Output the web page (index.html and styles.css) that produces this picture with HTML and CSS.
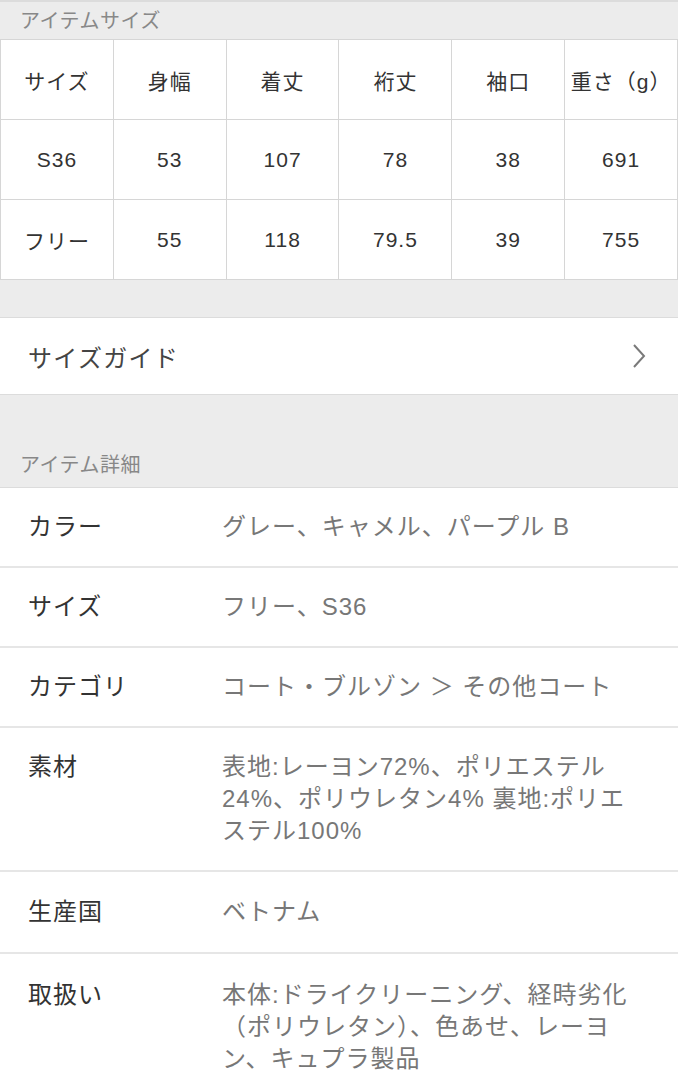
FILE: index.html
```html
<!DOCTYPE html>
<html lang="ja">
<head>
<meta charset="utf-8">
<link rel="stylesheet" href="styles.css">
</head>
<body>
<div class="page">
  <div class="section-title top">アイテムサイズ</div>
  <table class="size-table">
    <tr><td>サイズ</td><td>身幅</td><td>着丈</td><td>裄丈</td><td>袖口</td><td>重さ（g）</td></tr>
    <tr><td>S36</td><td>53</td><td>107</td><td>78</td><td>38</td><td>691</td></tr>
    <tr><td>フリー</td><td>55</td><td>118</td><td>79.5</td><td>39</td><td>755</td></tr>
  </table>
  <div class="spacer"></div>
  <div class="guide-row">
    <span>サイズガイド</span>
    <svg class="chevron" width="14" height="26" viewBox="0 0 14 26"><polyline points="2,2 12,13 2,24" fill="none" stroke="#7a7a7a" stroke-width="2"/></svg>
  </div>
  <div class="section-title detail">アイテム詳細</div>
  <div class="details">
    <div class="row"><div class="label">カラー</div><div class="value">グレー、キャメル、パープル B</div></div>
    <div class="row"><div class="label">サイズ</div><div class="value">フリー、S36</div></div>
    <div class="row"><div class="label">カテゴリ</div><div class="value">コート・ブルゾン ＞ その他コート</div></div>
    <div class="row"><div class="label">素材</div><div class="value">表地:レーヨン72%、ポリエステル24%、ポリウレタン4% 裏地:ポリエステル100%</div></div>
    <div class="row tall"><div class="label">生産国</div><div class="value">ベトナム</div></div>
    <div class="row care"><div class="label">取扱い</div><div class="value">本体:ドライクリーニング、経時劣化（ポリウレタン）、色あせ、レーヨン、キュプラ製品</div></div>
  </div>
</div>
</body>
</html>
```
FILE: styles.css
```css
html, body {
  margin: 0;
  padding: 0;
  background: #ececec;
}
body {
  font-family: "Liberation Sans", "Noto Sans CJK JP", sans-serif;
  color: #333;
}
.page {
  width: 678px;
  border-top: 2px solid #dcdcdc;
}
.section-title {
  font-size: 20px;
  color: #888;
  padding-left: 20px;
  letter-spacing: 0.5px;
}
.section-title.top {
  height: 37px;
  line-height: 38px;
}
.size-table {
  width: 678px;
  border-collapse: collapse;
  table-layout: fixed;
  background: #fff;
}
.size-table td {
  height: 79px;
  padding: 0;
  border: 1px solid #d6d6d6;
  text-align: center;
  font-size: 21px;
  letter-spacing: 1px;
  color: #333;
}
.spacer {
  height: 37px;
  border-bottom: 1px solid #dcdcdc;
}
.guide-row {
  height: 76px;
  background: #fff;
  border-bottom: 1px solid #dcdcdc;
  display: flex;
  align-items: center;
  justify-content: space-between;
  padding: 0 32px 0 28px;
  font-size: 24px;
  letter-spacing: 1.3px;
  color: #444;
}
.chevron {
  display: block;
}
.section-title.detail {
  height: 93px;
  display: flex;
  align-items: flex-end;
  padding-bottom: 6px;
  box-sizing: border-box;
  line-height: 32px;
  border-bottom: 1px solid #dcdcdc;
}
.details {
  background: #fff;
}
.row {
  display: flex;
  padding: 23px 0 23px 28px;
  border-bottom: 2px solid #e6e6e6;
  font-size: 24px;
  line-height: 32px;
  letter-spacing: 1px;
}
.row.tall {
  padding-top: 24px;
  padding-bottom: 24px;
}
.row.care {
  padding-top: 25px;
}
.label {
  width: 194px;
  flex: none;
  color: #333;
}
.value {
  width: 420px;
  color: #777;
}
```
